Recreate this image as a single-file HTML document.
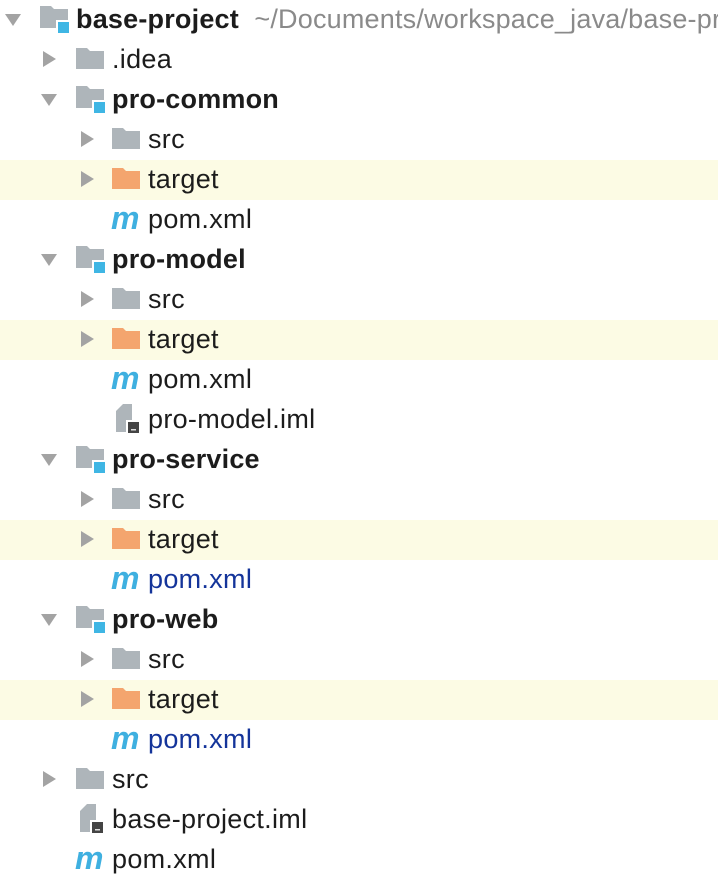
<!DOCTYPE html>
<html><head><meta charset="utf-8"><style>
body{margin:0;width:718px;height:886px;background:#fff;overflow:hidden;font-family:"Liberation Sans",Arial,sans-serif;}
.r{position:absolute;left:0;width:718px;height:40px;}
.hl{background:#fcfbe4;}
.t{position:absolute;top:5px;font-size:27px;letter-spacing:0.3px;color:#1c1c1c;white-space:nowrap;line-height:28px;}
.b{font-weight:bold;letter-spacing:0.2px;}
.blue{color:#14349a;}
.g{color:#8a8a8a;font-weight:normal;}
svg{position:absolute;}
.m{position:absolute;top:2px;font:italic bold 32px "Liberation Sans",sans-serif;color:#3fb0e0;line-height:32px;letter-spacing:-1px;}
</style></head><body>
<svg width="0" height="0"><defs>
<symbol id="down" viewBox="0 0 18 18"><path d="M1 4h16L9 16z" fill="#a3a3a3"/></symbol>
<symbol id="right" viewBox="0 0 18 18"><path d="M3 1v16L16 9z" fill="#a3a3a3"/></symbol>
<symbol id="fold" viewBox="0 0 28 22"><path d="M0 0h11l3 3h14v18H0z" fill="#aeb5ba"/></symbol>
<symbol id="ofold" viewBox="0 0 28 22"><path d="M0 0h11l3 3h14v18H0z" fill="#f4a56e"/></symbol>
<symbol id="mod" viewBox="0 0 30 28"><path d="M0 0h11l3 3h14v11h-12v8H0z" fill="#aeb5ba"/><rect x="18" y="16" width="11" height="11" fill="#3fb6e4"/></symbol>
<symbol id="iml" viewBox="0 0 26 30"><path d="M7 0h9v16h-6v12H0V7z" fill="#aeb5ba"/><rect x="12" y="18" width="11" height="11" fill="#444"/><rect x="15" y="25" width="5" height="1.5" fill="#ddd"/></symbol>
</defs></svg>

<div class="r" style="top:0"><svg style="left:4px;top:10px" width="18" height="18"><use href="#down"/></svg><svg style="left:40px;top:6px" width="30" height="28"><use href="#mod"/></svg><div class="t b" style="left:76px">base-project <span class="g">&nbsp;~/Documents/workspace_java/base-pr</span></div></div>
<div class="r" style="top:40px"><svg style="left:40px;top:10px" width="18" height="18"><use href="#right"/></svg><svg style="left:76px;top:8px" width="28" height="22"><use href="#fold"/></svg><div class="t" style="left:112px">.idea</div></div>
<div class="r" style="top:80px"><svg style="left:40px;top:10px" width="18" height="18"><use href="#down"/></svg><svg style="left:76px;top:6px" width="30" height="28"><use href="#mod"/></svg><div class="t b" style="left:112px">pro-common</div></div>
<div class="r" style="top:120px"><svg style="left:78px;top:10px" width="18" height="18"><use href="#right"/></svg><svg style="left:112px;top:8px" width="28" height="22"><use href="#fold"/></svg><div class="t" style="left:148px">src</div></div>
<div class="r hl" style="top:160px"><svg style="left:78px;top:10px" width="18" height="18"><use href="#right"/></svg><svg style="left:112px;top:8px" width="28" height="22"><use href="#ofold"/></svg><div class="t" style="left:148px">target</div></div>
<div class="r" style="top:200px"><div class="m" style="left:111px">m</div><div class="t" style="left:148px">pom.xml</div></div>

<div class="r" style="top:240px"><svg style="left:40px;top:10px" width="18" height="18"><use href="#down"/></svg><svg style="left:76px;top:6px" width="30" height="28"><use href="#mod"/></svg><div class="t b" style="left:112px">pro-model</div></div>
<div class="r" style="top:280px"><svg style="left:78px;top:10px" width="18" height="18"><use href="#right"/></svg><svg style="left:112px;top:8px" width="28" height="22"><use href="#fold"/></svg><div class="t" style="left:148px">src</div></div>
<div class="r hl" style="top:320px"><svg style="left:78px;top:10px" width="18" height="18"><use href="#right"/></svg><svg style="left:112px;top:8px" width="28" height="22"><use href="#ofold"/></svg><div class="t" style="left:148px">target</div></div>
<div class="r" style="top:360px"><div class="m" style="left:111px">m</div><div class="t" style="left:148px">pom.xml</div></div>
<div class="r" style="top:400px"><svg style="left:116px;top:4px" width="26" height="30"><use href="#iml"/></svg><div class="t" style="left:148px">pro-model.iml</div></div>

<div class="r" style="top:440px"><svg style="left:40px;top:10px" width="18" height="18"><use href="#down"/></svg><svg style="left:76px;top:6px" width="30" height="28"><use href="#mod"/></svg><div class="t b" style="left:112px">pro-service</div></div>
<div class="r" style="top:480px"><svg style="left:78px;top:10px" width="18" height="18"><use href="#right"/></svg><svg style="left:112px;top:8px" width="28" height="22"><use href="#fold"/></svg><div class="t" style="left:148px">src</div></div>
<div class="r hl" style="top:520px"><svg style="left:78px;top:10px" width="18" height="18"><use href="#right"/></svg><svg style="left:112px;top:8px" width="28" height="22"><use href="#ofold"/></svg><div class="t" style="left:148px">target</div></div>
<div class="r" style="top:560px"><div class="m" style="left:111px">m</div><div class="t blue" style="left:148px">pom.xml</div></div>

<div class="r" style="top:600px"><svg style="left:40px;top:10px" width="18" height="18"><use href="#down"/></svg><svg style="left:76px;top:6px" width="30" height="28"><use href="#mod"/></svg><div class="t b" style="left:112px">pro-web</div></div>
<div class="r" style="top:640px"><svg style="left:78px;top:10px" width="18" height="18"><use href="#right"/></svg><svg style="left:112px;top:8px" width="28" height="22"><use href="#fold"/></svg><div class="t" style="left:148px">src</div></div>
<div class="r hl" style="top:680px"><svg style="left:78px;top:10px" width="18" height="18"><use href="#right"/></svg><svg style="left:112px;top:8px" width="28" height="22"><use href="#ofold"/></svg><div class="t" style="left:148px">target</div></div>
<div class="r" style="top:720px"><div class="m" style="left:111px">m</div><div class="t blue" style="left:148px">pom.xml</div></div>

<div class="r" style="top:760px"><svg style="left:40px;top:10px" width="18" height="18"><use href="#right"/></svg><svg style="left:76px;top:8px" width="28" height="22"><use href="#fold"/></svg><div class="t" style="left:112px">src</div></div>
<div class="r" style="top:800px"><svg style="left:80px;top:4px" width="26" height="30"><use href="#iml"/></svg><div class="t" style="left:112px">base-project.iml</div></div>
<div class="r" style="top:840px"><div class="m" style="left:75px">m</div><div class="t" style="left:112px">pom.xml</div></div>
</body></html>
